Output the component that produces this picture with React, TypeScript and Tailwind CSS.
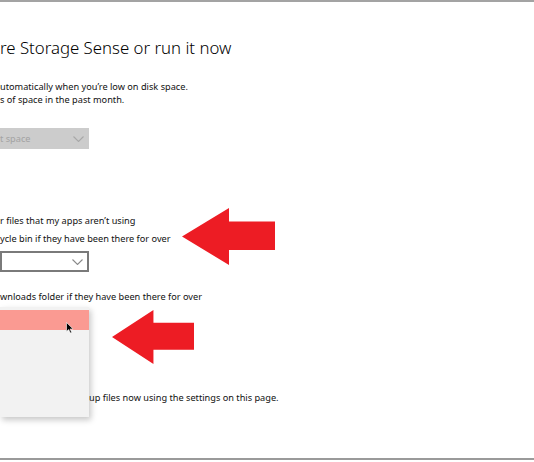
import React from "react";

const font = { fontFamily: '"Noto Sans", "Open Sans", sans-serif' };

const Chevron = ({ color }: { color: string }) => (
  <svg width="11" height="6" viewBox="0 0 11 6" fill="none">
    <path d="M0.5 0.5l5 5 5-5" stroke={color} strokeWidth="1.1" />
  </svg>
);

const RedArrow = ({ className }: { className: string }) => (
  <svg className={className} viewBox="0 0 93 57" preserveAspectRatio="none">
    <polygon points="0,28.5 47,0 47,13.5 93,13.5 93,42 47,42 47,57" fill="#ed1c24" />
  </svg>
);

export default function App() {
  return (
    <div
      className="relative h-[462px] w-[534px] overflow-hidden border-t-2 border-[#a3a3a3] bg-white text-[9.2px] text-[#111]"
      style={font}
    >
      <div className="flex flex-col">
        <h1 className="mt-[35px] text-[16.8px] font-light leading-[22px] text-black">
          re Storage Sense or run it now
        </h1>
        <div className="mt-[21px] leading-[13px]">
          <p>utomatically when you’re low on disk space.</p>
          <p>s of space in the past month.</p>
        </div>
        <div className="mt-[22px] flex h-[21px] w-[89px] items-center justify-between bg-[#cccccc] pr-[5px] text-[#a3a3a3]">
          <span>t space</span>
          <Chevron color="#a8a8a8" />
        </div>
        <p className="mt-[65px] leading-[13px]">r files that my apps aren’t using</p>
        <p className="mt-[5px] leading-[13px]">ycle bin if they have been there for over</p>
        <div className="mt-[6px] flex h-[21px] w-[89px] items-center justify-end border-2 border-[#7a7a7a] pr-[4px]">
          <Chevron color="#8a8a8a" />
        </div>
        <p className="mt-[18px] leading-[13px]">wnloads folder if they have been there for over</p>
        <p className="mt-[88px] ml-[89px] leading-[13px]">up files now using the settings on this page.</p>
      </div>

      {/* open dropdown list */}
      <div className="absolute left-0 top-[305px] h-[110px] w-[89px] bg-[#f2f2f2] pt-[3px] shadow-[2px_3px_6px_rgba(0,0,0,0.22)]">
        <div className="h-[20px] w-full bg-[#fa9a92]" />
      </div>
      <svg className="absolute left-[66px] top-[320px]" width="8" height="12" viewBox="0 0 8 12">
        <path d="M0.5 0.5v9l2.2-2 1.6 3.5 1.4-.6-1.6-3.4h3z" fill="#000" stroke="#fff" strokeWidth="0.6" />
      </svg>

      <div className="absolute bottom-[2px] left-0 h-[2px] w-full bg-[#9a9a9a]" />

      <RedArrow className="absolute left-[182px] top-[206px] h-[57px] w-[93px]" />
      <RedArrow className="absolute left-[112px] top-[308px] h-[54px] w-[82px]" />
    </div>
  );
}
